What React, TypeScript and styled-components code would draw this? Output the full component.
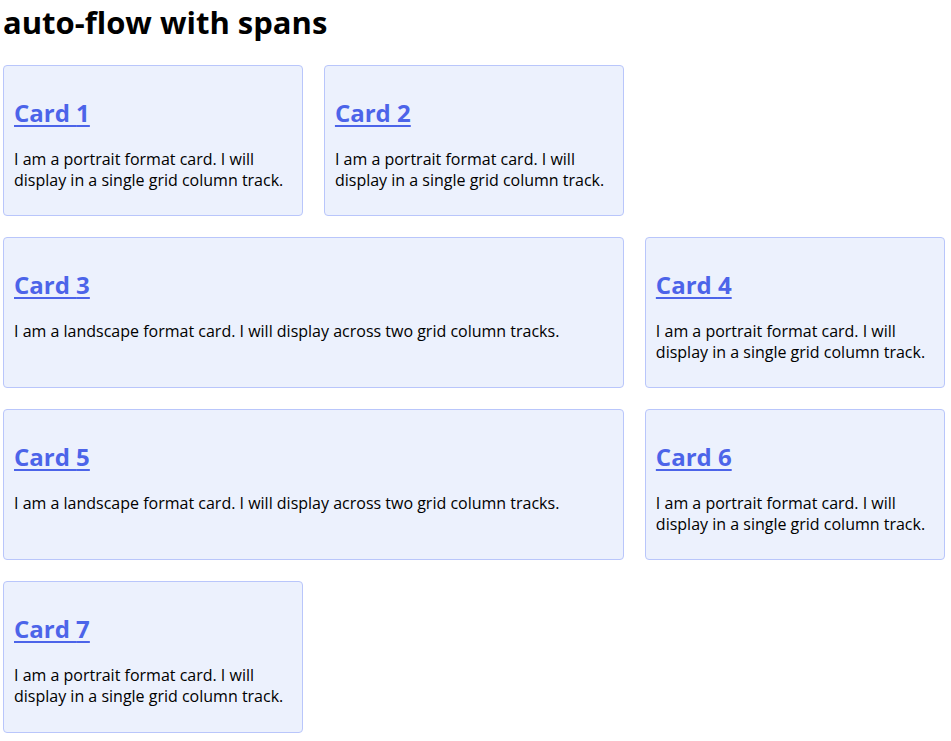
import React from "react";
import styled, { createGlobalStyle } from "styled-components";

const GlobalStyle = createGlobalStyle`
  html, body { margin: 0; padding: 0; background: #ffffff; }
  body { font-family: "Open Sans", "Noto Sans CJK KR", sans-serif; color: #000; }
`;

const Page = styled.main`
  padding: 0 6px 0 3px;
`;

const Title = styled.h1`
  margin: 0 0 21px;
  font-size: 31px;
  line-height: 44px;
  font-weight: 700;
`;

const Grid = styled.div`
  display: grid;
  grid-template-columns: repeat(3, 1fr);
  grid-auto-flow: row;
  gap: 20.8px;
`;

const Card = styled.article<{ $wide?: boolean }>`
  grid-column: ${(p) => (p.$wide ? "span 2" : "span 1")};
  background: #ecf1fd;
  border: 1px solid #b9c6fb;
  border-radius: 4px;
  padding: 11px 10px 8.3px;
`;

const CardTitle = styled.h2`
  margin: 20px 0;
  font-size: 24px;
  line-height: 32px;
  font-weight: 700;
`;

const CardLink = styled.a`
  color: #4c64e9;
  text-decoration: underline;
  text-underline-offset: 3px;
`;

const CardText = styled.p`
  margin: 0 0 16px;
  font-size: 16px;
  line-height: 21px;
`;

const portrait = "I am a portrait format card. I will display in a single grid column track.";
const landscape = "I am a landscape format card. I will display across two grid column tracks.";

const cards = [
  { n: 1, wide: false },
  { n: 2, wide: false },
  { n: 3, wide: true },
  { n: 4, wide: false },
  { n: 5, wide: true },
  { n: 6, wide: false },
  { n: 7, wide: false },
];

export default function App() {
  return (
    <>
      <GlobalStyle />
      <Page>
        <Title>auto-flow with spans</Title>
        <Grid>
          {cards.map((c) => (
            <Card key={c.n} $wide={c.wide}>
              <CardTitle>
                <CardLink href="#">Card {c.n}</CardLink>
              </CardTitle>
              <CardText>{c.wide ? landscape : portrait}</CardText>
            </Card>
          ))}
        </Grid>
      </Page>
    </>
  );
}
